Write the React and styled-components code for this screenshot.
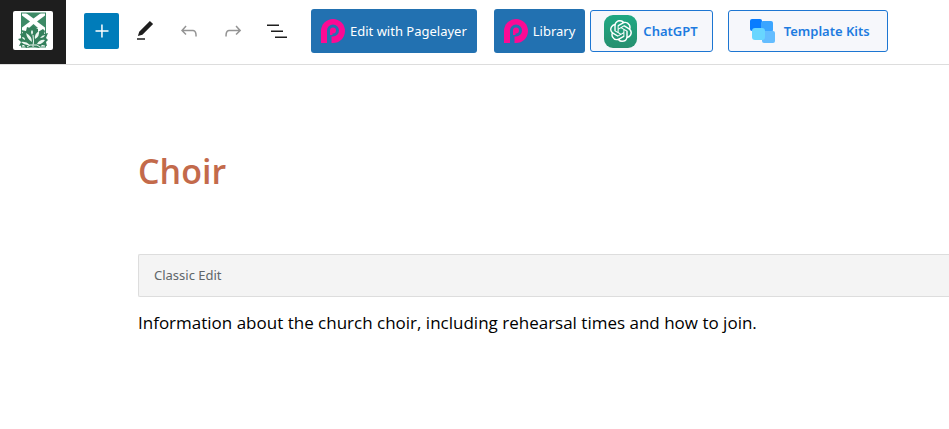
import React from "react";
import styled, {createGlobalStyle} from "styled-components";
import {SiOpenai} from "react-icons/si";

function SiteLogo() {
  return (
    <svg width="40" height="39" viewBox="0 0 40 39" aria-hidden="true">
      <rect width="40" height="39" rx="2" fill="#fff"/>
      <rect x="8.5" y="2" width="24" height="34" fill="#fff" stroke="#3d8a66"/>
      <path d="M13 2H28L20.5 7.5ZM9 4.5L17 10.5L9 16.5ZM32 4.5L24 10.5L32 16.5ZM20.5 13L25 17H16Z" fill="#3d8a66"/>
      <path
        d="M20 15l3 2 2 1v3l5-3 2 2-1 3 4-1-2 5 2 2-2 2 1 4-5-1-3 3-4-1h-4l-5 1-2-3-5 1 2-4-3-3 4-1-2-4 3-1-2-3 5 1 1-4 3 1z"
        fill="#35805c"/>
      <g fill="#edf7f1">
        <path d="M19 31q-5-3-6-9 6 3 6 9zM22 28q-1-5 4-8 1 5-4 8zM17 34q-4-4-9-3 4 4 9 3zM24 33q3-5 8-4-3 5-8 4z"/>
        <path d="M12 29q-3-1-3-3 3 0 3 3zM19 24q-2-3 0-5 2 2 0 5zM27 27q2-3 5-3-1 3-5 3z"/>
      </g>
      <path d="M20 36q1-6 0-12M14 36q3-3 6-2M27 36q-3-3-6-2" stroke="#edf7f1" fill="none"/>
    </svg>
  );
}

function PagelayerLogo() {
  return (
    <svg width="24" height="24" viewBox="0 0 24 24" aria-hidden="true">
      <path d="M0 24V12A12 12 0 1 1 12 24Z" fill="#fb0a94"/>
      <path d="M6 24V11.5A6 6 0 1 1 12 17.5H10.5V24" fill="#2271b1"/>
      <circle cx="12" cy="11.5" r="3" fill="#fb0a94"/>
      <path d="M9 11.500H11.5V16H9Z" fill="#fb0a94"/>
    </svg>
  );
}

function TemplateLogo() {
  return (
    <svg width="26" height="26" viewBox="0 0 26 26" aria-hidden="true">
      <rect x="1" y="1" width="12" height="12" rx="2" fill="#087cff"/>
      <rect x="12" y="3" width="12" height="11" rx="2" fill="#3ba5ff"/>
      <rect x="13" y="13" width="13" height="12" rx="2" fill="#64bdff"/>
      <rect x="3" y="10" width="13" height="12" rx="3" fill="#68d6ff"/>
    </svg>
  );
}

function App() {
  return (
    <>
      <GlobalStyle/>
      <Header>
        <HomeLink href="#" aria-label="View Pages">
          <SiteLogo/>
        </HomeLink>
        <Tools>
          <InserterButton type="button" aria-label="Toggle block inserter">
            <svg width="24" height="24" viewBox="0 0 24 24">
              <path d="M11.2 12.8V18.500H12.7V12.8H18.5V11.3H12.7V5.5H11.2V11.3H5.5V12.8Z"/>
            </svg>
          </InserterButton>
          <ToolButton type="button" aria-label="Tools">
            <svg width="24" height="24" viewBox="0 0 24 24">
              <path d="M20.1 5.1L16.9 2 6.2 12.7l-1.3 4.4 4.5-1.3L20.1 5.1zM4 20.8h8v-1.5H4v1.5z"/>
            </svg>
          </ToolButton>
          <ToolButton type="button" aria-label="Undo" $muted>
            <svg width="24" height="24" viewBox="0 0 24 24">
              <path d="M18.3 11.7c-.6-.6-1.4-.9-2.3-.9H6.7l2.9-3.3-1.1-1-4.5 5L8.5 16l1-1-2.7-2.7H16c.5 0 .9.2 1.3.5 1 1 1 3.4 1 4.5v.3h1.5v-.2c0-1.5 0-4.3-1.5-5.7z"/>
            </svg>
          </ToolButton>
          <ToolButton type="button" aria-label="Redo" $muted>
            <svg width="24" height="24" viewBox="0 0 24 24">
              <path d="M15.6 6.5l-1.1 1 2.9 3.3H8c-.9 0-1.7.3-2.3.9-1.4 1.5-1.4 4.2-1.4 5.6v.2h1.5v-.3c0-1.1 0-3.5 1-4.5.3-.3.7-.5 1.3-.5h9.2L14.5 15l1.1 1.1 4.6-4.6-4.6-5z"/>
            </svg>
          </ToolButton>
          <ToolButton type="button" aria-label="Document Overview">
            <svg width="24" height="24" viewBox="0 0 24 24">
              <path d="M2 5.5h12V7H2zM6 11.5h12V13H6zM10 17.5h12V19H10z"/>
            </svg>
          </ToolButton>
        </Tools>
        <Actions>
          <PagelayerButton type="button"><PagelayerLogo/>Edit with Pagelayer</PagelayerButton>
          <PagelayerButton type="button"><PagelayerLogo/>Library</PagelayerButton>
        </Actions>
        <Plugins>
          <OutlineButton type="button">
            <GptBadge><SiOpenai size={22}/></GptBadge>
            ChatGPT
          </OutlineButton>
          <OutlineButton type="button" $wide>
            <TemplateLogo/>
            Template Kits
          </OutlineButton>
        </Plugins>
      </Header>
      <Main>
        <Title>Choir</Title>
        <BlockBar>Classic Edit</BlockBar>
        <Text>Information about the church choir, including rehearsal times and how to join.</Text>
      </Main>
    </>
  );
}

const GlobalStyle = createGlobalStyle`
    * {
        box-sizing: border-box;
    }
    body {
        margin: 0;
        background: #fff;
        font-family: "Noto Sans", "Open Sans", sans-serif;
        font-size: 13px;
    }
    button {
        font: inherit;
        cursor: pointer;
    }
`;
const Header = styled.header`
    display: flex;
    align-items: stretch;
    border-bottom: 1px solid #ddd;
    white-space: nowrap;
`;
const HomeLink = styled.a`
    display: flex;
    align-items: center;
    justify-content: center;
    flex: none;
    width: 66px;
    height: 64px;
    padding-bottom: 3px;
    background: #1e1e1e;
`;
const Tools = styled.div`
    display: flex;
    align-items: center;
    gap: 8px;
    padding: 0 16px 2px 18px;
`;
const ToolButton = styled.button`
    display: flex;
    align-items: center;
    justify-content: center;
    width: 36px;
    height: 36px;
    padding: 0;
    border: 0;
    border-radius: 2px;
    background: transparent;
    fill: ${({$muted}) => ($muted ? "#949494" : "#1e1e1e")};
`;
const InserterButton = styled(ToolButton)`
    width: 35px;
    background: #007cba;
    fill: #fff;
`;
const Actions = styled.div`
    display: flex;
    align-items: center;
    gap: 17px;
    padding-bottom: 2px;
`;
const PagelayerButton = styled.button`
    display: flex;
    align-items: center;
    gap: 5px;
    height: 44px;
    padding: 0 10px;
    border: 0;
    border-radius: 3px;
    background: #2271b1;
    color: #fff;
`;
const Plugins = styled.div`
    display: flex;
    align-items: center;
    gap: 15px;
    padding: 0 5px 2px;
`;
const OutlineButton = styled.button`
    display: flex;
    align-items: center;
    gap: ${({$wide}) => ($wide ? "9px" : "6px")};
    height: 42px;
    padding: ${({$wide}) => ($wide ? "0 17px 0 20px" : "0 14px 0 13px")};
    border: 1px solid #1d76d2;
    border-radius: 3px;
    background: #f6f7fb;
    color: #1d7be0;
    font-weight: 600;
`;
const GptBadge = styled.span`
    display: flex;
    align-items: center;
    justify-content: center;
    width: 33px;
    height: 33px;
    border-radius: 9px;
    background: linear-gradient(#1fa883, #26906f);
    color: #fff;
`;
const Main = styled.main`
    padding: 80px 0 0 138px;
`;
const Title = styled.h1`
    margin: 0 0 57px;
    color: #c36a4b;
    font-family: "Open Sans", sans-serif;
    font-size: 34px;
    font-weight: 600;
    line-height: 52px;
`;
const BlockBar = styled.div`
    padding: 0 15px;
    border: 1px solid #ddd;
    border-right: 0;
    border-radius: 2px 0 0 2px;
    background: #f4f4f4;
    color: #606669;
    line-height: 41px;
`;
const Text = styled.p`
    margin: 12px 0 0;
    color: #000;
    font-family: "Open Sans", sans-serif;
    font-size: 17px;
    line-height: 28px;
`;

export default App;
